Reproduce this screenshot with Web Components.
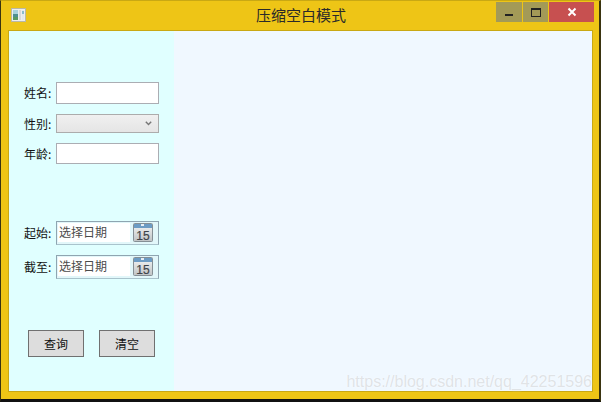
<!DOCTYPE html>
<html lang="zh"><head><meta charset="utf-8"><title>压缩空白模式</title>
<style>
html,body{margin:0;padding:0;height:100%;background:#111}
body{font-family:"Noto Sans CJK SC","Liberation Sans",sans-serif;overflow:hidden}
</style></head><body>
<app-window heading="压缩空白模式">
  <filter-panel></filter-panel>
</app-window>
<script>
function el(name, css, html){
  customElements.define(name, class extends HTMLElement{
    constructor(){super();const s=this.attachShadow({mode:'open'});
      s.innerHTML='<style>'+css+'</style>'+(typeof html==='function'?html(this):html);}
  });
}
el('win-icon',`:host{display:block;width:15px;height:14px;box-sizing:border-box}svg{display:block}`,
`<svg width="15" height="14" viewBox="0 0 15 14"><rect x=".5" y=".5" width="14" height="13" fill="#eee" stroke="#b9b9a6"/><rect x="2" y="2" width="5" height="10" fill="#4f8f92"/><rect x="2" y="2" width="5" height="4" fill="#a9d2de"/><rect x="2" y="9" width="5" height="3" fill="#5a9a62"/><rect x="8" y="2" width="2" height="10" fill="#d9d9d9"/><rect x="11" y="2" width="2" height="10" fill="#e4e9ea"/><rect x="11" y="3" width="2" height="3" fill="#8dbccb"/></svg>`);
el('win-controls',`:host{display:flex;gap:1px;align-items:flex-start;height:21px;padding-top:1px;box-sizing:border-box}
 .b{height:20px;display:flex;align-items:center;justify-content:center}
 .min,.max{background:#a39a57}.min{width:26px}.max{width:25px}.close{width:45px;background:#c75050}svg{display:block}`,
`<div class="b min"><svg width="10" height="10"><rect x="1" y="7" width="8" height="2" fill="#222"/></svg></div>
 <div class="b max"><svg width="10" height="9"><rect x=".5" y=".5" width="9" height="8" fill="none" stroke="#222"/><rect x="0" y="0" width="10" height="2" fill="#222"/></svg></div>
 <div class="b close"><svg width="10" height="10"><path d="M1.5 1.5l7 7M8.5 1.5l-7 7" stroke="#fff" stroke-width="2" fill="none"/></svg></div>`);
el('app-window',`:host{display:flex;flex-direction:column;width:601px;height:402px;box-sizing:border-box;background:#eec516;border-top:1px solid #c9a813;border-left:1px solid #3a3410;border-right:2px solid #3a3410;border-bottom:3px solid #111;position:relative}
 .bar{display:grid;grid-template-columns:1fr auto 1fr;height:29px;padding:0 5px 0 10px;box-sizing:border-box;flex:none}
 .l{padding-top:7px}.t{font-size:15px;line-height:20px;padding-top:4px;color:#2a2a2a;margin-left:-3px}.r{display:flex;justify-content:flex-end}
 .body{flex:1;margin:0 6px 7px 7px;border:1px solid #c9a813;display:flex;min-height:0;background:#f0f8ff;position:relative}
 .wm{position:absolute;right:0;bottom:-3px;font:16px/24px "Liberation Sans",sans-serif;color:rgba(175,175,175,.32);text-shadow:0 0 2px rgba(255,255,255,.8);white-space:nowrap}`,
 h=>`<div class="bar"><div class="l"><win-icon></win-icon></div><div class="t">${h.getAttribute('heading')}</div><div class="r"><win-controls></win-controls></div></div>
 <div class="body"><slot></slot><span class="wm">https://blog.csdn.net/qq_42251596</span></div>`);
el('form-row',`:host{display:flex;align-items:center;font-size:12px;line-height:16px;color:#111}
 .k{width:47px;box-sizing:border-box;padding-left:15px;white-space:nowrap}.v{width:103px;flex:none}`,
 h=>`<div class="k">${h.getAttribute('label')}</div><div class="v"><slot></slot></div>`);
el('text-box',`:host{display:block;box-sizing:border-box;border:1px solid #abadb3;background:#fff;height:var(--h,22px)}`,``);
el('combo-box',`:host{display:flex;align-items:center;justify-content:flex-end;box-sizing:border-box;height:19px;border:1px solid #acacac;background:linear-gradient(#f0f0f0,#e5e5e5);padding-right:6px}svg{display:block}`,
 `<svg width="7" height="5"><path d="M.8 .8L3.5 3.6 6.2 .8" fill="none" stroke="#777" stroke-width="1.4"/></svg>`);
el('date-box',`:host{display:flex;align-items:flex-start;box-sizing:border-box;height:24px;border:1px solid #8fa5b1;border-bottom-color:#a9c3cc;background:#e2f7fa;padding:1px;font-size:12px;color:#555}
 .i{flex:1;background:#fff;height:19px;line-height:18px;padding-left:1px;color:#4b4b4b;margin-right:3px}
 svg{display:block;flex:none;margin-right:4px}`,
 `<div class="i">选择日期</div>
 <svg width="20" height="19" viewBox="0 0 20 19"><defs><linearGradient id="c" x1="0" y1="0" x2="0" y2="1"><stop offset="0" stop-color="#f6f7f7"/><stop offset="1" stop-color="#bfc3c5"/></linearGradient></defs><rect x=".5" y=".5" width="19" height="18" rx="1" fill="url(#c)" stroke="#858f95"/><rect x="1" y="1" width="18" height="4" fill="#6d9cc4"/><rect x="8" y="1" width="3" height="2" fill="#e6eef5"/><text x="10" y="16.5" text-anchor="middle" font-family="Liberation Sans" font-size="12" fill="#3f444a" stroke="#3f444a" stroke-width=".2">15</text></svg>`);
el('push-button',`:host{display:flex;align-items:center;justify-content:center;box-sizing:border-box;width:56px;height:27px;border:1px solid #707070;background:#ddd;font-size:12px;color:#111}`,`<slot></slot>`);
el('filter-panel',`:host{display:flex;flex-direction:column;flex:none;width:165px;height:100%;box-sizing:border-box;background:#e0ffff;padding:51px 15px 0 0}
 .g{--h:21px}.btns{display:flex;gap:15px;padding-left:19px;margin-top:51px}
 .m10{margin-top:10px}.m57{margin-top:57px}`,
 `<form-row label="姓名:"><text-box></text-box></form-row>
  <form-row class="m10" label="性别:"><combo-box></combo-box></form-row>
  <form-row class="m10 g" label="年龄:"><text-box></text-box></form-row>
  <form-row class="m57" label="起始:"><date-box></date-box></form-row>
  <form-row class="m10" label="截至:"><date-box></date-box></form-row>
  <div class="btns"><push-button>查询</push-button><push-button>清空</push-button></div>`);
</script></body></html>
